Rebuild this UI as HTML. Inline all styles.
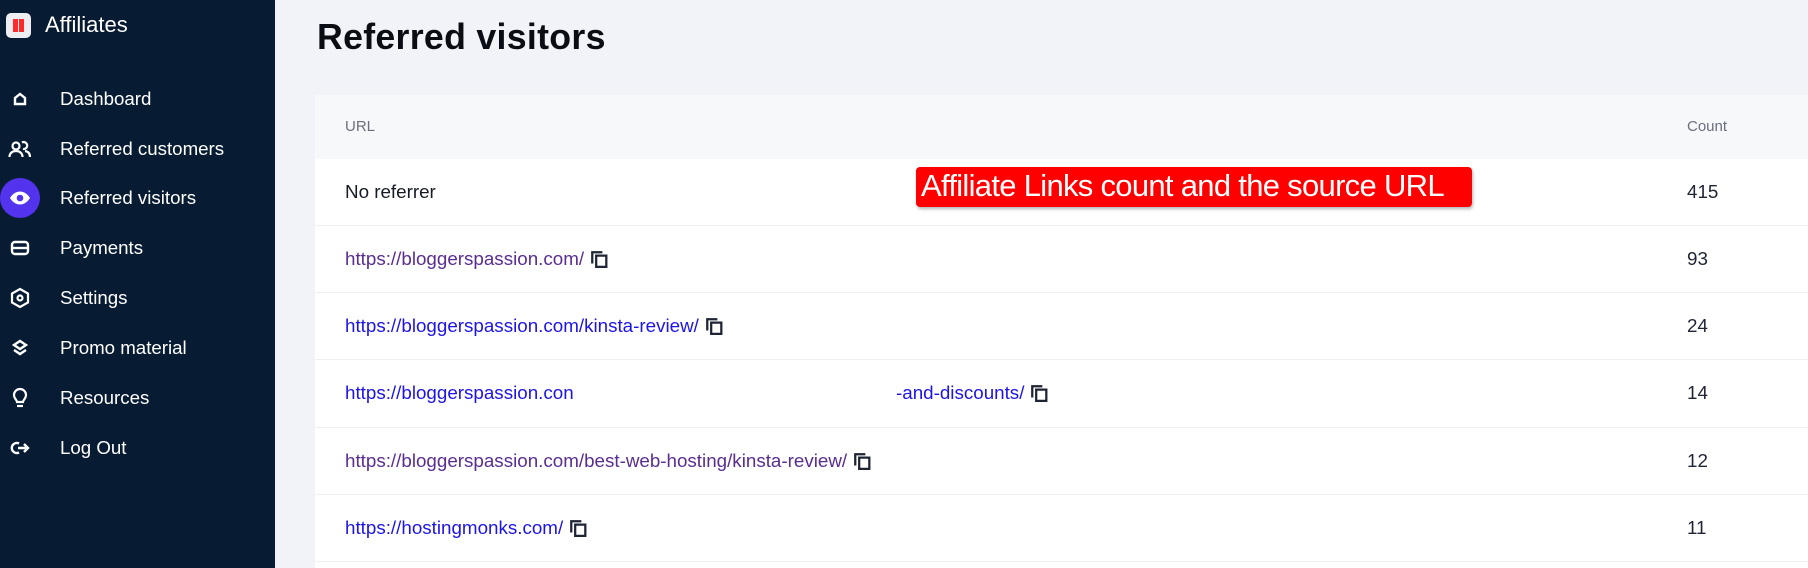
<!DOCTYPE html>
<html style="height:568px;overflow:hidden"><head><meta charset="utf-8"><style>
*{margin:0;padding:0;box-sizing:border-box}
body{width:1808px;height:568px;overflow:hidden;background:#f2f3f8;font-family:"Liberation Sans",sans-serif;position:relative}
.sb{position:absolute;left:0;top:0;width:275px;height:568px;background:#071c33}
.logo{position:absolute;left:6px;top:13px;width:25px;height:25px;background:#eeeef2;border-radius:5px}
.logo i{position:absolute;top:6px;width:5px;height:13px;background:#ff2a2a}
.brand{position:absolute;left:45px;top:12px;color:#fff;font-size:22px}
.it{position:absolute;left:60px;color:#fff;font-size:18.7px;transform:translateY(-50%)}
.ic{position:absolute;left:8px;width:24px;height:24px;transform:translateY(-50%)}
.act{position:absolute;left:0;top:178px;width:40px;height:40px;border-radius:50%;background:#5333ed}
h1{position:absolute;left:317px;top:17px;font-size:35.7px;font-weight:bold;color:#0b0d14;letter-spacing:0.3px}
.card{position:absolute;left:315px;top:95px;width:1493px;height:473px;background:#fff;overflow:hidden}
.hd{position:absolute;left:0;top:0;width:100%;height:64px;background:#f7f8fa}
.hd span{position:absolute;top:23px;font-size:15px;color:#6b6f7d}
.row{position:absolute;left:0;width:100%;height:67px;border-top:1px solid #eff0f3}
.row span{position:absolute;top:50%;transform:translateY(-50%);font-size:18.8px;white-space:nowrap}
.u{left:30px}
.c{left:1372px;color:#1e2433}
.p{color:#5a2d91}.b{color:#1d14e8}
.cp{display:inline-block;vertical-align:middle;margin-left:6px;margin-top:-3px}
.lab{position:absolute;left:916px;top:167px;width:556px;height:40px;background:#ff0000;border-radius:4px;box-shadow:1px 2px 3px rgba(0,0,0,.3);color:#fff;font-family:"Liberation Sans",Arial,sans-serif;font-size:31px;line-height:38px;padding-left:5px;letter-spacing:-0.7px;white-space:nowrap}
</style></head><body>
<div class="sb">
<div class="logo"><i style="left:7px"></i><i style="left:13px"></i></div>
<div class="brand">Affiliates</div>
<div class="act"></div>
<svg class="ic" style="top:99px" viewBox="0 0 24 24" fill="none" stroke="#fff" stroke-width="2.4"><path d="M7 17V11l5-4 5 4v6z"/></svg>
<svg class="ic" style="top:150px" viewBox="0 0 24 24" fill="none" stroke="#fff" stroke-width="2.2"><circle cx="8" cy="8" r="3.5"/><path d="M1.5 19c0-4 3-6 6.5-6s6.5 2 6.5 6"/><path d="M14 4.5a3.5 3.5 0 1 1 1 6.5M17 13c3 .5 5 2.5 5 6"/></svg>
<svg class="ic" style="top:198px" viewBox="0 0 24 24"><path d="M2 12c3-5 7-6.5 10-6.5S19 7 22 12c-3 5-7 6.5-10 6.5S5 17 2 12z" fill="#fff"/><circle cx="12" cy="12" r="3.3" fill="#5333ed"/></svg>
<svg class="ic" style="top:248px" viewBox="0 0 24 24" fill="none" stroke="#fff" stroke-width="2.4"><rect x="4" y="6" width="16" height="12" rx="3"/><path d="M4 12h16"/></svg>
<svg class="ic" style="top:298px" viewBox="0 0 24 24" fill="none" stroke="#fff" stroke-width="2.2"><path d="M12 3l8 4.5v9L12 21l-8-4.5v-9z"/><circle cx="12" cy="12" r="2.5"/></svg>
<svg class="ic" style="top:348px" viewBox="0 0 24 24" fill="none" stroke="#fff" stroke-width="2.4"><path d="M12 5l6 4-6 4-6-4z"/><path d="M6 14l6 4 6-4"/></svg>
<svg class="ic" style="top:398px" viewBox="0 0 24 24" fill="none" stroke="#fff" stroke-width="2.2"><path d="M9 16c0-2-3-3.5-3-7a6 6 0 0 1 12 0c0 3.5-3 5-3 7z"/><path d="M9 20h6"/></svg>
<svg class="ic" style="top:448px" viewBox="0 0 24 24" fill="none" stroke="#fff" stroke-width="2.4"><path d="M11 7.5A5 5 0 1 0 11 16.5"/><path d="M10 12h10M16 8l4 4-4 4"/></svg>
<div class="it" style="top:99px">Dashboard</div>
<div class="it" style="top:149px">Referred customers</div>
<div class="it" style="top:198px">Referred visitors</div>
<div class="it" style="top:248px">Payments</div>
<div class="it" style="top:298px">Settings</div>
<div class="it" style="top:348px">Promo material</div>
<div class="it" style="top:398px">Resources</div>
<div class="it" style="top:448px">Log Out</div>
</div>
<h1>Referred visitors</h1>
<div class="card">
<div class="hd"><span style="left:30px">URL</span><span style="left:1372px">Count</span></div>
<div class="row" style="top:64px;border-top:none;height:66px"><span class="u" style="color:#151a24">No referrer</span><span class="c">415</span></div>
<div class="row" style="top:130px"><span class="u p">https://bloggerspassion.com/<svg class="cp" width="18" height="18" viewBox="0 0 16 16" fill="none" stroke="#1e2433" stroke-width="2"><path d="M2 12V2h9"/><rect x="5.5" y="5" width="9" height="10"/></svg></span><span class="c">93</span></div>
<div class="row" style="top:197px"><span class="u b">https://bloggerspassion.com/kinsta-review/<svg class="cp" width="18" height="18" viewBox="0 0 16 16" fill="none" stroke="#1e2433" stroke-width="2"><path d="M2 12V2h9"/><rect x="5.5" y="5" width="9" height="10"/></svg></span><span class="c">24</span></div>
<div class="row" style="top:264px"><span class="u b">https://bloggerspassion.con</span><span class="b" style="left:581px">-and-discounts/<svg class="cp" width="18" height="18" viewBox="0 0 16 16" fill="none" stroke="#1e2433" stroke-width="2"><path d="M2 12V2h9"/><rect x="5.5" y="5" width="9" height="10"/></svg></span><span class="c">14</span></div>
<div class="row" style="top:332px"><span class="u p">https://bloggerspassion.com/best-web-hosting/kinsta-review/<svg class="cp" width="18" height="18" viewBox="0 0 16 16" fill="none" stroke="#1e2433" stroke-width="2"><path d="M2 12V2h9"/><rect x="5.5" y="5" width="9" height="10"/></svg></span><span class="c">12</span></div>
<div class="row" style="top:399px"><span class="u b">https://hostingmonks.com/<svg class="cp" width="18" height="18" viewBox="0 0 16 16" fill="none" stroke="#1e2433" stroke-width="2"><path d="M2 12V2h9"/><rect x="5.5" y="5" width="9" height="10"/></svg></span><span class="c">11</span></div>
<div class="row" style="top:466px;height:7px"></div>
</div>
<div class="lab">Affiliate Links count and the source URL</div>
</body></html>
